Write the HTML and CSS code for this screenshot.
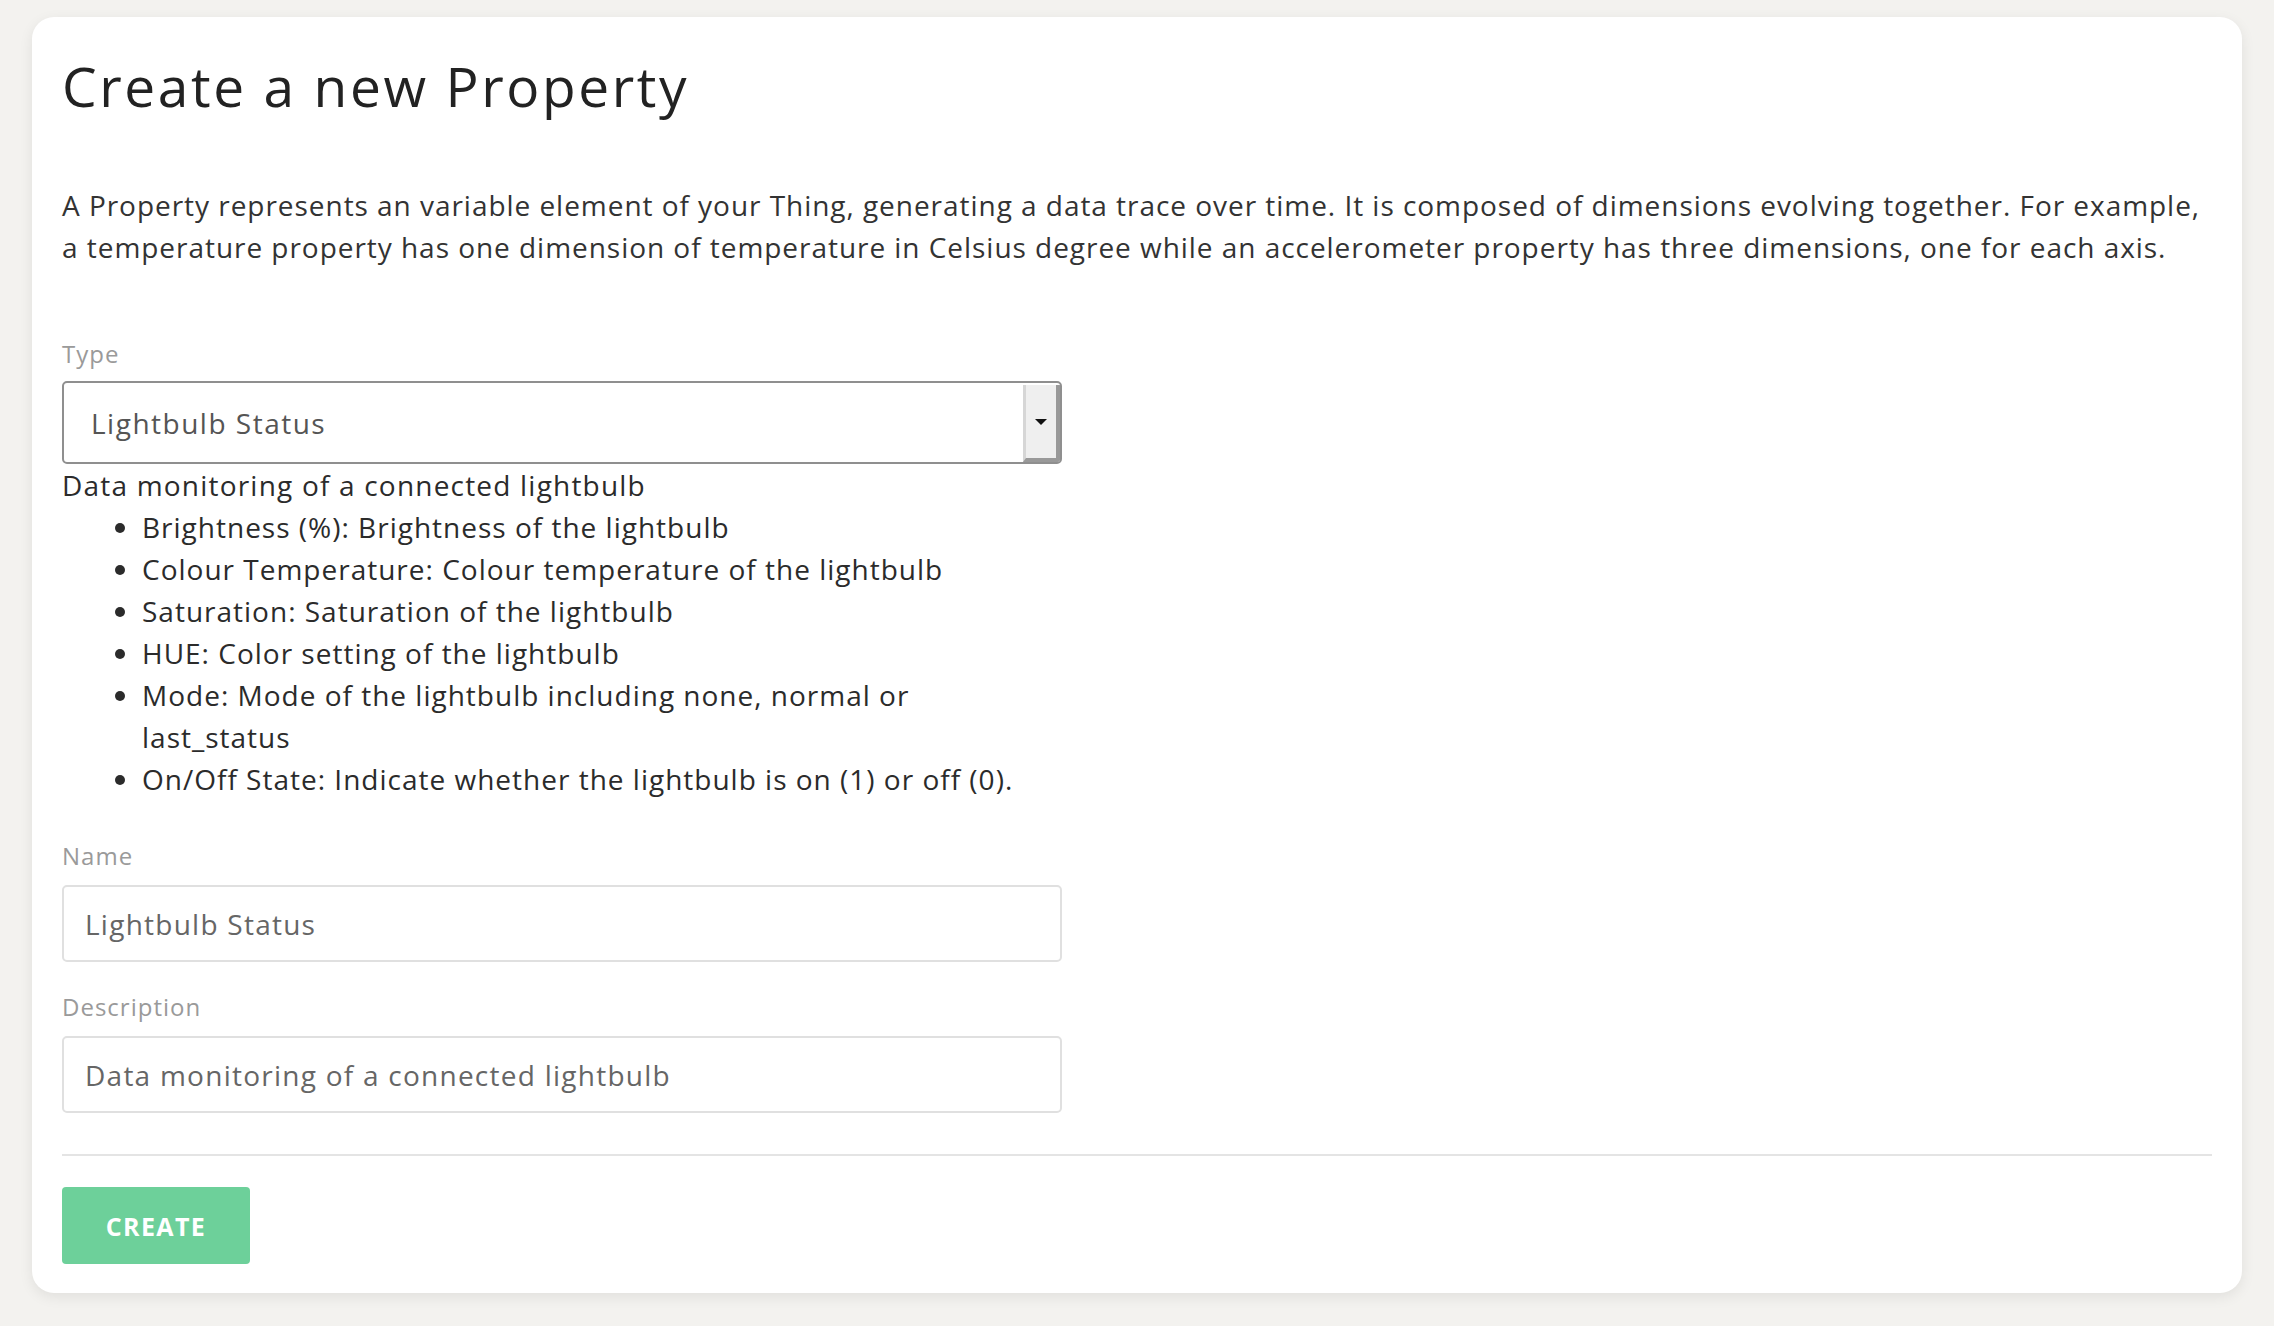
FILE: index.html
```html
<!DOCTYPE html>
<html>
<head>
<meta charset="utf-8">
<link rel="stylesheet" href="styles.css">
</head>
<body>
<div class="card">
  <h1 class="title">Create a new Property</h1>
  <p class="intro">A Property represents an variable element of your Thing, generating a data trace over time. It is composed of dimensions evolving together. For example, a temperature property has one dimension of temperature in Celsius degree while an accelerometer property has three dimensions, one for each axis.</p>

  <div class="field field-type">
    <div class="label">Type</div>
    <div class="select">
      <span class="select-value">Lightbulb Status</span>
      <span class="select-btn"><span class="tri"></span></span>
    </div>
  </div>
  <div class="type-desc">
    <div class="type-title">Data monitoring of a connected lightbulb</div>
    <ul class="dims">
      <li>Brightness (%): Brightness of the lightbulb</li>
      <li>Colour Temperature: Colour temperature of the lightbulb</li>
      <li>Saturation: Saturation of the lightbulb</li>
      <li>HUE: Color setting of the lightbulb</li>
      <li>Mode: Mode of the lightbulb including none, normal or last_status</li>
      <li>On/Off State: Indicate whether the lightbulb is on (1) or off (0).</li>
    </ul>
  </div>

  <div class="field field-name">
    <div class="label">Name</div>
    <div class="input">Lightbulb Status</div>
  </div>
  <div class="field field-desc">
    <div class="label">Description</div>
    <div class="input">Data monitoring of a connected lightbulb</div>
  </div>

  <hr class="divider">
  <button class="btn">CREATE</button>
</div>
</body>
</html>
```

FILE: styles.css
```css
html, body {
  margin: 0;
  padding: 0;
}
body {
  background: #f3f2ef;
  font-family: "Open Sans", "DejaVu Sans", sans-serif;
  color: #2b2b2b;
  padding: 17px 32px 34px 32px;
}
.card {
  background: #fff;
  border-radius: 22px;
  padding: 34px 30px 29px 30px;
  box-shadow: 0 4px 14px rgba(0, 0, 0, 0.08);
}
.title {
  font-size: 55px;
  font-weight: 400;
  letter-spacing: 2.6px;
  line-height: 70px;
  margin: 0;
  color: #222;
}
.intro {
  font-size: 28px;
  letter-spacing: 0.96px;
  line-height: 42px;
  margin: 63px 0 0 0;
  color: #333;
}
.field-type {
  margin-top: 71px;
}
.label {
  font-size: 24px;
  letter-spacing: 1px;
  line-height: 30px;
  color: #9a9a9a;
}
.select {
  margin-top: 12px;
  width: 1000px;
  height: 83px;
  box-sizing: border-box;
  border: 2px solid #8f8f8f;
  border-radius: 5px;
  display: flex;
  align-items: center;
  overflow: hidden;
}
.select-value {
  flex: 1;
  padding-left: 27px;
  font-size: 28px;
  letter-spacing: 1.5px;
  color: #555;
}
.select-btn {
  align-self: stretch;
  width: 30px;
  margin: 2px 0 0 0;
  background: #efefef;
  border-left: 3px solid #d6d6d6;
  border-right: 4px solid #999;
  border-bottom: 4px solid #999;
  display: flex;
  align-items: center;
  justify-content: center;
}
.tri {
  width: 0;
  height: 0;
  border-left: 6px solid transparent;
  border-right: 6px solid transparent;
  border-top: 6px solid #111;
}
.type-desc {
  width: 1000px;
  font-size: 28px;
  letter-spacing: 1px;
  line-height: 42px;
  color: #2b2b2b;
}
.type-title {
  letter-spacing: 1.2px;
}
.dims {
  margin: 0;
  padding-left: 80px;
}
.dims li {
  max-width: 890px;
}
.field-name {
  margin-top: 41px;
}
.field-desc {
  margin-top: 30px;
}
.input {
  margin-top: 14px;
  width: 1000px;
  height: 77px;
  box-sizing: border-box;
  border: 2px solid #e0e0e0;
  border-radius: 5px;
  padding-left: 21px;
  display: flex;
  align-items: center;
  font-size: 28px;
  letter-spacing: 1.25px;
  color: #666;
}
.divider {
  border: 0;
  border-top: 2px solid #e4e4e4;
  margin: 41px 0 0 0;
}
.btn {
  margin-top: 31px;
  width: 188px;
  height: 77px;
  background: #6dd09a;
  border: 0;
  border-radius: 4px;
  color: #fff;
  font-family: "Open Sans", sans-serif;
  font-weight: 700;
  font-size: 25px;
  letter-spacing: 1.4px;
  display: block;
}
```
